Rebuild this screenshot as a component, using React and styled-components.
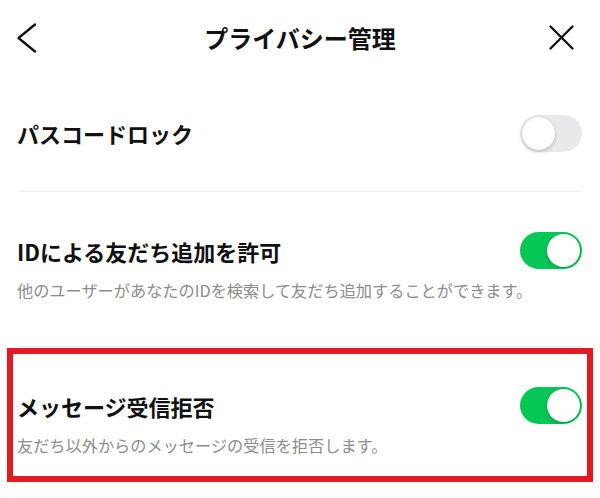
import React from 'react'
import styled, { createGlobalStyle } from 'styled-components'

const GlobalStyle = createGlobalStyle`
    html, body {
        margin: 0;
        padding: 0;
        background: #FFFFFF;
    }

    body {
        font-family: "Noto Sans CJK JP", "Noto Sans", sans-serif;
        color: #111111;
    }
`

const Screen = styled.div`
    width: 600px;
    height: 498px;
    overflow: hidden;
    background: #FFFFFF;
`

const Header = styled.header`
    display: grid;
    grid-template-columns: 1fr auto 1fr;
    align-items: center;
    height: 75px;
`

const Title = styled.h1`
    margin: 0;
    font-size: 24px;
    font-weight: 700;
    line-height: 30px;
    color: #111111;
`

const IconButton = styled.button`
    display: flex;
    align-items: center;
    justify-content: center;
    padding: 0;
    border: 0;
    background: none;
    color: #111111;
    justify-self: ${({ side }) => (side === 'right' ? 'end' : 'start')};
    margin: ${({ side }) => (side === 'right' ? '0 25px 0 0' : '1px 0 0 16px')};
`

const List = styled.div`
    margin: 0 18px 0 17px;
`

const Section = styled.section`
    position: relative;
    display: flex;
    flex-direction: column;
    justify-content: center;
    gap: 10px;
    min-height: ${({ compact }) => (compact ? '117px' : 'auto')};
    padding: ${({ compact }) => (compact ? '0' : '40px 0 45px')};
    border-bottom: 1px solid #EDEDED;
    box-sizing: border-box;
`

const Row = styled.div`
    display: flex;
    align-items: center;
    justify-content: space-between;
`

const Label = styled.span`
    font-size: 22px;
    font-weight: 700;
    line-height: 30px;
    color: #111111;
`

const Description = styled.p`
    margin: 0;
    font-size: 16.2px;
    line-height: 22px;
    color: #8C8C8C;
`

const Track = styled.span`
    position: relative;
    display: block;
    width: 62px;
    height: 37px;
    border-radius: 19px;
    background: ${({ on }) => (on ? '#06C755' : '#E9E9EB')};
    flex-shrink: 0;
`

const Knob = styled.span`
    position: absolute;
    top: 2px;
    left: ${({ on }) => (on ? '27px' : '2px')};
    width: 33px;
    height: 33px;
    border-radius: 50%;
    background: #FFFFFF;
    box-shadow: 0 2px 4px rgba(0, 0, 0, 0.18), 0 0 0 0.5px rgba(0, 0, 0, 0.06);
`

const Highlight = styled.div`
    position: absolute;
    top: 1px;
    left: -10px;
    right: -11px;
    bottom: 19px;
    border: 6px solid #E21B1F;
    pointer-events: none;
`

const Toggle = ({ on }) => (
    <Track on={on ? 1 : 0}>
        <Knob on={on ? 1 : 0} />
    </Track>
)

const BackIcon = () => (
    <svg width="21" height="30" viewBox="0 0 21 30" fill="none">
        <path d="M19 1.5 L2.5 15 L19 28.5" stroke="currentColor" strokeWidth="2.3" strokeLinecap="round" strokeLinejoin="round" />
    </svg>
)

const CloseIcon = () => (
    <svg width="27" height="27" viewBox="0 0 27 27" fill="none">
        <path d="M2.5 2.5 L24.5 24.5 M24.5 2.5 L2.5 24.5" stroke="currentColor" strokeWidth="2.3" strokeLinecap="round" />
    </svg>
)

const App = () => (
    <Screen>
        <GlobalStyle />
        <Header>
            <IconButton side="left" aria-label="戻る">
                <BackIcon />
            </IconButton>
            <Title>プライバシー管理</Title>
            <IconButton side="right" aria-label="閉じる">
                <CloseIcon />
            </IconButton>
        </Header>
        <List>
            <Section compact>
                <Row>
                    <Label>パスコードロック</Label>
                    <Toggle />
                </Row>
            </Section>
            <Section>
                <Row>
                    <Label>IDによる友だち追加を許可</Label>
                    <Toggle on />
                </Row>
                <Description>他のユーザーがあなたのIDを検索して友だち追加することができます。</Description>
            </Section>
            <Section>
                <Row>
                    <Label>メッセージ受信拒否</Label>
                    <Toggle on />
                </Row>
                <Description>友だち以外からのメッセージの受信を拒否します。</Description>
                <Highlight />
            </Section>
        </List>
    </Screen>
)

export default App
